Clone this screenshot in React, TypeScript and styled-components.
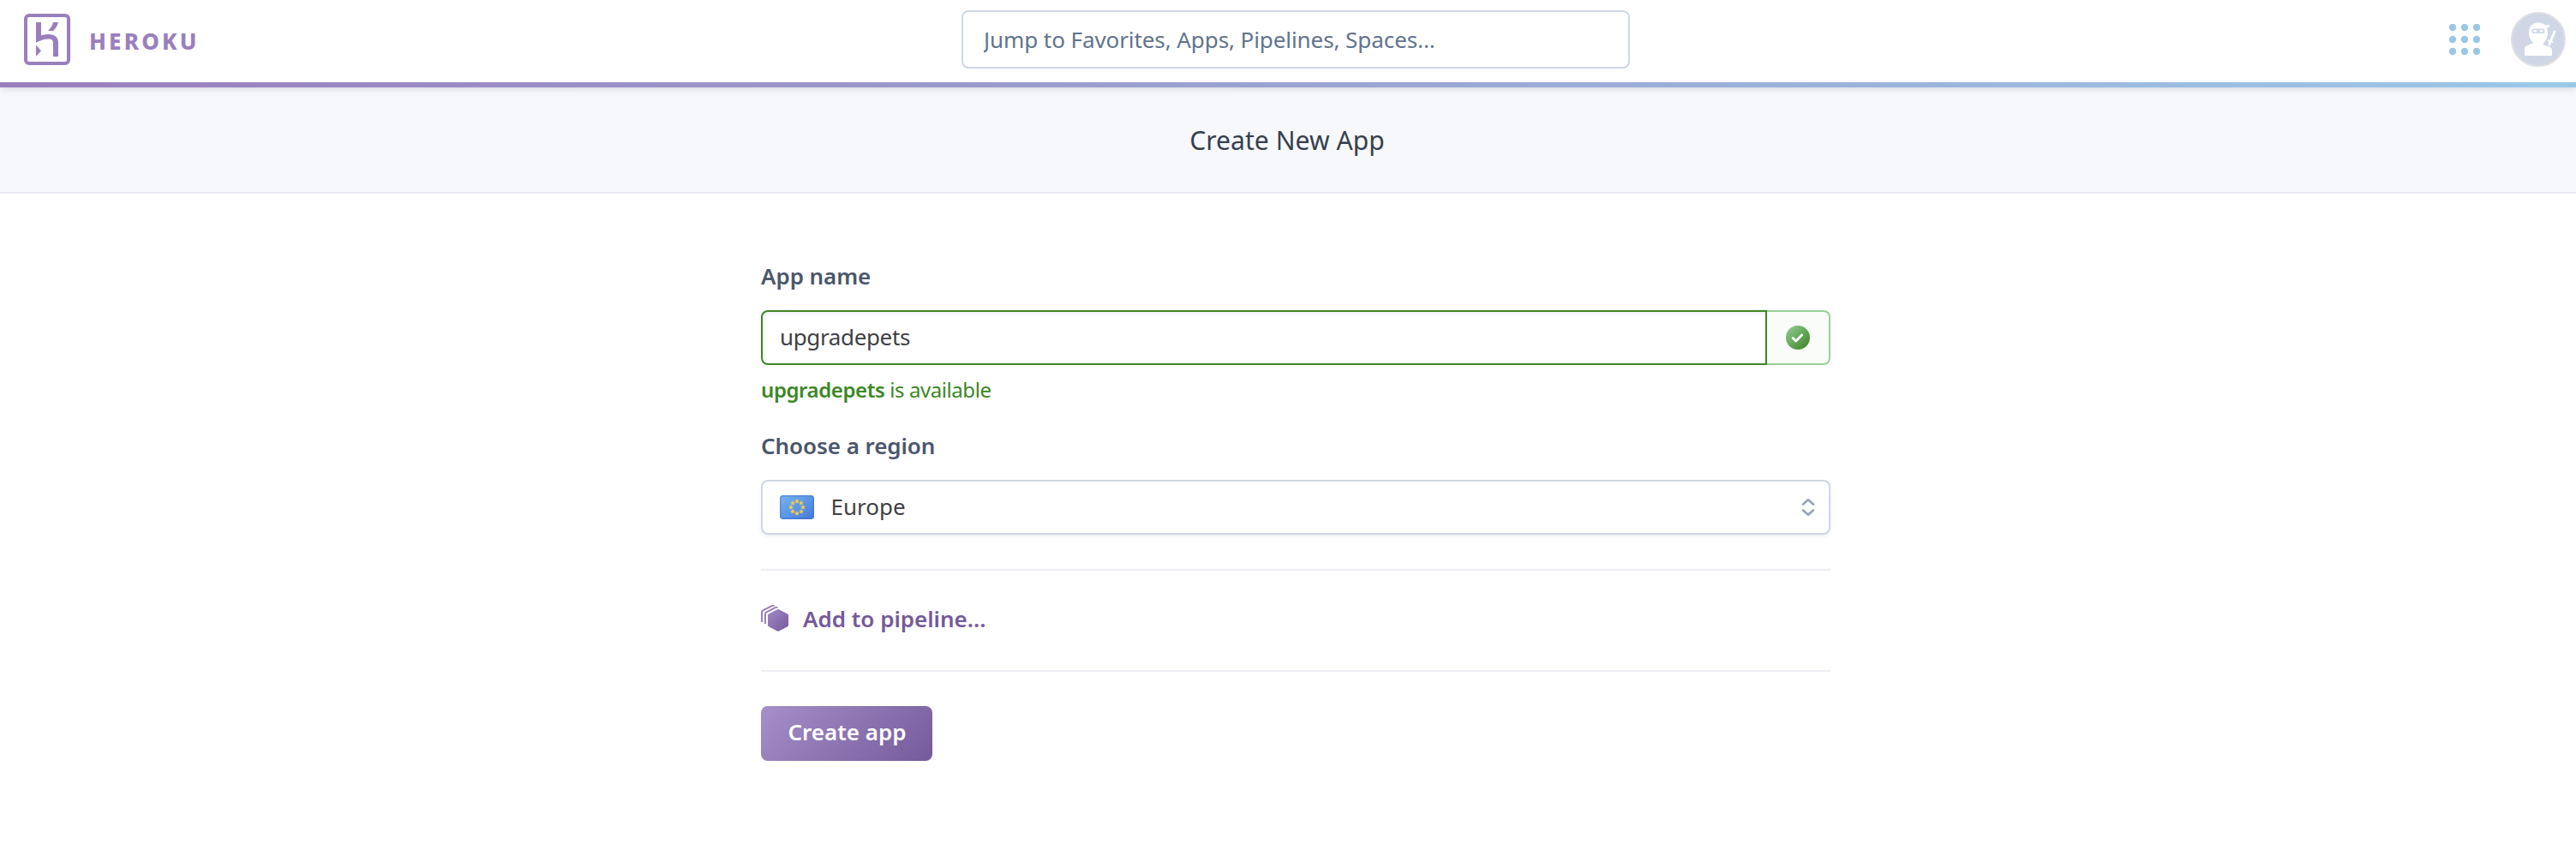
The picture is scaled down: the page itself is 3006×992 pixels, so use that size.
import React from "react";
import styled, { createGlobalStyle } from "styled-components";

const GlobalStyle = createGlobalStyle`
  *, *::before, *::after { box-sizing: border-box; }
  body {
    margin: 0;
    background: #fff;
    color: #3f3f44;
    font: 400 26px/40px "Noto Sans", "Open Sans", sans-serif;
  }
  button, input { font: inherit; color: inherit; margin: 0; }
`;

const Page = styled.div`
  min-height: 992px;
`;

const Header = styled.header`
  position: relative;
  height: 102px;
  padding: 0 10px 10px 28px;
  display: grid;
  grid-template-columns: 1fr 780px 1fr;
  align-items: center;
  background: linear-gradient(90deg, #9a7ebd, #9bc8e7) bottom / 100% 6px no-repeat #fff;
  box-shadow: 0 2px 8px rgba(0, 0, 0, 0.13);
`;

const Brand = styled.a`
  display: flex;
  align-items: center;
  gap: 22px;
  color: #9a7fbd;

  svg { display: block; }
`;

const BrandName = styled.span`
  padding-top: 3px;
  font-weight: 800;
  letter-spacing: 3.2px;
`;

const Search = styled.input`
  width: 780px;
  height: 68px;
  padding: 0 24px 0 24px;
  border: 2px solid #cfd7e6;
  border-radius: 8px;
  background: #fff;
  letter-spacing: -0.08px;
  outline: none;

  &::placeholder { color: #62738d; opacity: 1; }
`;

const HeaderTools = styled.div`
  display: flex;
  justify-content: flex-end;
  align-items: center;
  gap: 36px;
  padding-right: 2px;

  svg { display: block; }
`;

const TitleBar = styled.div`
  height: 124px;
  padding: 1px 2px 0 0;
  display: flex;
  align-items: center;
  justify-content: center;
  background: #f7f8fc;
  border-bottom: 2px solid #e8ebf1;
`;

const Title = styled.h1`
  margin: 0;
  font-size: 30px;
  font-weight: 400;
  letter-spacing: 0.08px;
  color: #363f4e;
`;

const Main = styled.main`
  display: flex;
  justify-content: center;
  padding: 76px 0 0 18px;
`;

const Form = styled.form`
  width: 1248px;
`;

const Label = styled.label`
  display: block;
  margin-bottom: 20px;
  font-weight: 600;
  letter-spacing: -0.06px;
  color: #4b566b;
`;

const InputGroup = styled.div`
  display: flex;
  height: 64px;
`;

const NameInput = styled.input`
  flex: 1;
  min-width: 0;
  padding: 0 20px 3px;
  border: 2px solid #3c8724;
  border-radius: 8px 0 0 8px;
  background: #fff;
  box-shadow: inset 0 2px 4px rgba(100, 110, 160, 0.12);
  letter-spacing: -0.36px;
  outline: none;
`;

const Addon = styled.div`
  width: 74px;
  display: flex;
  align-items: center;
  justify-content: center;
  border: 2px solid #98cf9a;
  border-left: 0;
  border-radius: 0 8px 8px 0;
  background: #f9fcf9;
`;

const Hint = styled.p`
  margin: 9px 0 25px;
  font-size: 24px;
  letter-spacing: -0.42px;
  color: #3c8724;

  strong { font-weight: 600; }
`;

const Select = styled.div`
  height: 64px;
  padding: 0 16px 0 20px;
  display: flex;
  align-items: center;
  border: 2px solid #cfd7e6;
  border-radius: 8px;
  background: #fff;
  box-shadow: 0 2px 4px rgba(100, 110, 160, 0.1);

  svg { display: block; }
`;

const SelectValue = styled.span`
  flex: 1;
  padding: 0 0 3px 19.5px;
`;

const PipelineRow = styled.div`
  height: 120px;
  margin-top: 40px;
  padding-bottom: 5px;
  display: flex;
  align-items: center;
  border-top: 2px solid #eeeff6;
  border-bottom: 2px solid #eeeff6;
`;

const PipelineLink = styled.a`
  display: flex;
  align-items: center;
  gap: 17px;
  font-weight: 600;
  color: #745a99;
`;

const Submit = styled.button`
  display: block;
  width: 200px;
  height: 64px;
  margin-top: 40px;
  padding: 0 0 5px 1px;
  border: 0;
  border-radius: 8px;
  background: linear-gradient(135deg, #a68fcb 0%, #745a99 100%);
  color: #fff;
  font-weight: 600;
`;

function HerokuLogo() {
  return (
    <svg width="54" height="60" viewBox="28 16 54 60" fill="currentColor">
      <rect x="30" y="18" width="50" height="56" rx="4" fill="none" stroke="currentColor" strokeWidth="4" />
      <path d="M42 26h6v15.4c2.8-.8 5.900-1.400 9-1.400 6.600 0 11 3.500 11 9.400V66h-6V49.800c0-2.800-1.500-4.300-5.500-4.300-5 0-10.300 2.100-14.500 4.300z" />
      <path d="M62 26h6c-.8 3.600-2.900 7-5.800 10H56c3-3 5.200-6.400 6-10z" />
      <path d="M42 52.500l6 6.700-6 6.700z" />
    </svg>
  );
}

function AppGrid() {
  const steps = [4, 18, 32];
  return (
    <svg width="36" height="36" viewBox="0 0 36 36" fill="#9bc7e6">
      {steps.map((y) => steps.map((x) => <circle key={`${x}-${y}`} cx={x} cy={y} r="4.200" />))}
    </svg>
  );
}

function NinjaAvatar() {
  return (
    <svg width="64" height="64" viewBox="0 0 64 64">
      <circle cx="32" cy="32" r="31" fill="#cfd7e6" stroke="#dedee1" strokeWidth="2" />
      <g fill="#fff">
        <path d="M32 12.500c4 0 7 1.300 9 3.300 1.500-.3 3-1.300 4-2.300-.2 1.200-.7 2-1.300 2.700.9.100 1.800.1 2.600-.1-1.200 1.400-2.700 2-4.300 2 .7 1.700 1 3.500 1 5.900 0 6-2.500 9.500-5 12.500v2c2.500.5 6 1.500 8.500 3 1 .8 1.500 2 1.500 3.500v4.500c0 1-.5 1.500-1.500 1.500h-29c-1 0-1.500-.5-1.500-1.500V43c0-1.500.6-2.700 1.700-3.300 2.800-1.500 5.700-2.600 8.300-3.200v-.5C23 33 21 29.500 21 24c0-7 4-11.500 11-11.500z" />
        <path d="M50.200 21.500l2.600 1.100-4.700 11.100 1.500.9-.6 1.500-1.700-.6-1.600 4.200-2.800-1.300 1.700-4-2-1 .6-1.500 2.200.8z" />
      </g>
      <rect x="24.500" y="19.500" width="15" height="5.600" rx="2.600" fill="#cfd7e6" />
      <ellipse cx="28.300" cy="22.200" rx="1.900" ry="1.200" fill="#fff" />
      <ellipse cx="35.700" cy="22.200" rx="1.900" ry="1.200" fill="#fff" />
      <path d="M41.500 36l4 2" stroke="#cfd7e6" strokeWidth="1" />
    </svg>
  );
}

function CheckBadge() {
  return (
    <svg width="28" height="28" viewBox="0 0 28 28">
      <defs>
        <linearGradient id="check-fill" x1="0" y1="0" x2="1" y2="1">
          <stop offset="0.1" stopColor="#8ac58c" />
          <stop offset="0.9" stopColor="#438a2c" />
        </linearGradient>
      </defs>
      <circle cx="14" cy="14" r="14" fill="url(#check-fill)" />
      <path d="M8.200 14.600l3.500 3.500 7-7.200" fill="none" stroke="#fff" strokeWidth="2.800" strokeLinecap="round" strokeLinejoin="round" />
    </svg>
  );
}

const STAR = "M0-2.700L.8-.9 2.600-.8 1.200.5 1.600 2.300 0 1.400-1.600 2.300-1.200.5-2.600-.8-.8-.9z";

function EuropeFlag() {
  return (
    <svg width="40" height="28" viewBox="0 0 40 28">
      <defs>
        <linearGradient id="flag-fill" x1="0" y1="0" x2="1" y2="1">
          <stop offset="0" stopColor="#76b4ee" />
          <stop offset="1" stopColor="#4479dc" />
        </linearGradient>
      </defs>
      <rect width="40" height="28" rx="4" fill="url(#flag-fill)" />
      <rect x="0.700" y="0.700" width="38.600" height="26.600" rx="3.300" fill="none" stroke="#2c5fae" strokeOpacity="0.35" strokeWidth="1.400" />
      {Array.from({ length: 8 }, (_, i) => {
        const a = (i * Math.PI) / 4;
        const x = 20 + 7 * Math.sin(a);
        const y = 14 - 7 * Math.cos(a);
        return <path key={i} d={STAR} transform={`translate(${x} ${y})`} fill="#f8cd46" stroke="#f8cd46" strokeWidth="0.300" />;
      })}
    </svg>
  );
}

function SelectArrows() {
  return (
    <svg width="16" height="22" viewBox="0 0 16 22" fill="none" stroke="#96a3b6" strokeWidth="2.700" strokeLinecap="round" strokeLinejoin="round">
      <path d="M2 7.500l6-5.300 6 5.300M2 14.500l6 5.300 6-5.300" />
    </svg>
  );
}

function PipelineIcon() {
  return (
    <svg width="32" height="31" viewBox="0 0 32 31">
      <defs>
        <linearGradient id="hex-fill" x1="0" y1="0" x2="1" y2="1">
          <stop offset="0" stopColor="#a189c6" />
          <stop offset="1" stopColor="#745a99" />
        </linearGradient>
      </defs>
      <path d="M1 20V8.200q0-1 1-1.500L13 .9h2.500M5 22V10.200q0-1 1-1.500L17 2.900h2.500" fill="none" stroke="#967cb9" strokeWidth="1.900" />
      <path d="M19 5.300q1-.5 2 0l10 5.200q1 .5 1 1.500v11.700q0 1-1 1.500l-10 5.300q-1 .5-2 0l-10-5.300q-1-.5-1-1.500V12q0-1 1-1.500z" fill="url(#hex-fill)" />
    </svg>
  );
}

export default function App() {
  return (
    <Page>
      <GlobalStyle />
      <Header>
        <Brand>
          <HerokuLogo />
          <BrandName>HEROKU</BrandName>
        </Brand>
        <Search placeholder="Jump to Favorites, Apps, Pipelines, Spaces..." />
        <HeaderTools>
          <AppGrid />
          <NinjaAvatar />
        </HeaderTools>
      </Header>
      <TitleBar>
        <Title>Create New App</Title>
      </TitleBar>
      <Main>
        <Form>
          <Label htmlFor="app-name">App name</Label>
          <InputGroup>
            <NameInput id="app-name" defaultValue="upgradepets" spellCheck={false} />
            <Addon>
              <CheckBadge />
            </Addon>
          </InputGroup>
          <Hint>
            <strong>upgradepets</strong> is available
          </Hint>
          <Label as="div">Choose a region</Label>
          <Select>
            <EuropeFlag />
            <SelectValue>Europe</SelectValue>
            <SelectArrows />
          </Select>
          <PipelineRow>
            <PipelineLink>
              <PipelineIcon />
              Add to pipeline...
            </PipelineLink>
          </PipelineRow>
          <Submit type="button">Create app</Submit>
        </Form>
      </Main>
    </Page>
  );
}
